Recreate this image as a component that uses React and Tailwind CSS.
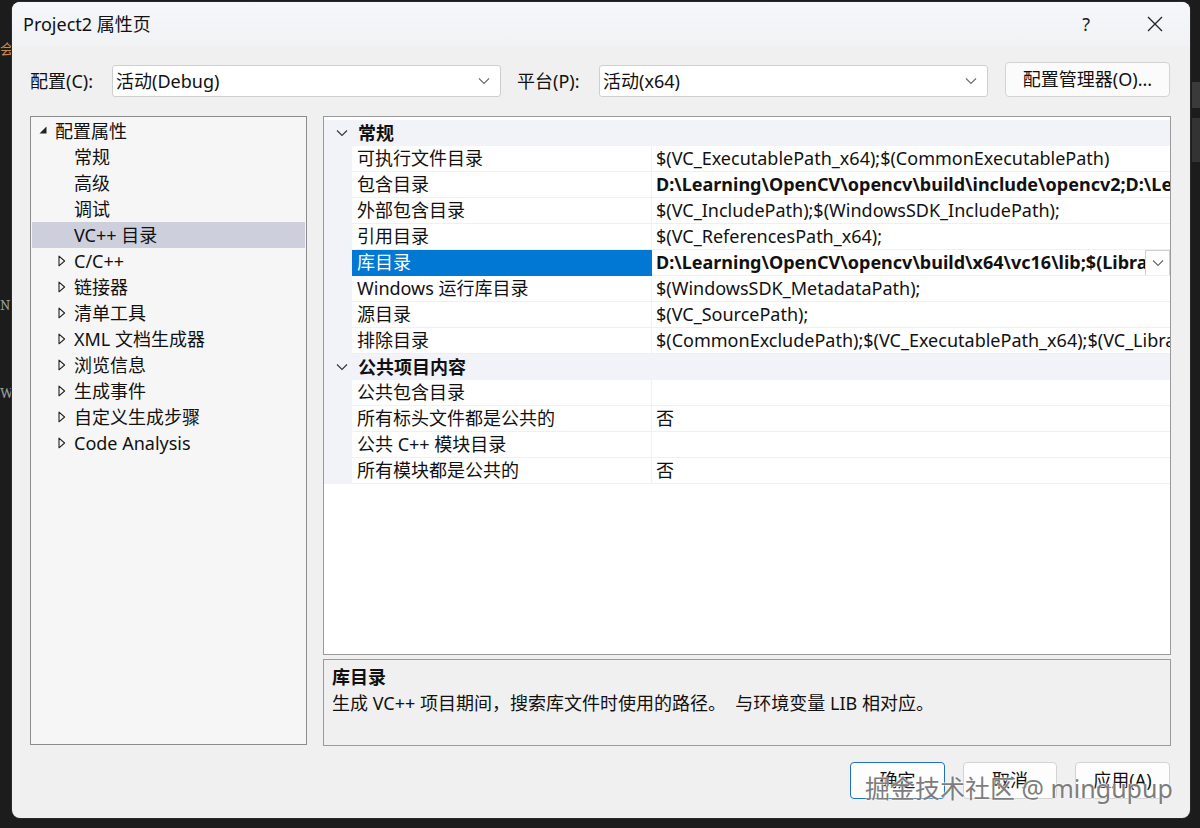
import React from 'react';

const FONT = { fontFamily: '"Noto Sans", "Noto Sans CJK SC", sans-serif' };

const treeItems = [
  { label: '常规' },
  { label: '高级' },
  { label: '调试' },
  { label: 'VC++ 目录', selected: true },
  { label: 'C/C++', collapsed: true },
  { label: '链接器', collapsed: true },
  { label: '清单工具', collapsed: true },
  { label: 'XML 文档生成器', collapsed: true },
  { label: '浏览信息', collapsed: true },
  { label: '生成事件', collapsed: true },
  { label: '自定义生成步骤', collapsed: true },
  { label: 'Code Analysis', collapsed: true },
];

const groups = [
  {
    title: '常规',
    rows: [
      { name: '可执行文件目录', value: '$(VC_ExecutablePath_x64);$(CommonExecutablePath)' },
      { name: '包含目录', value: 'D:\\Learning\\OpenCV\\opencv\\build\\include\\opencv2;D:\\Learning\\OpenCV\\opencv\\build\\include', bold: true },
      { name: '外部包含目录', value: '$(VC_IncludePath);$(WindowsSDK_IncludePath);' },
      { name: '引用目录', value: '$(VC_ReferencesPath_x64);' },
      { name: '库目录', value: 'D:\\Learning\\OpenCV\\opencv\\build\\x64\\vc16\\lib;$(LibraryPath)', bold: true, selected: true },
      { name: 'Windows 运行库目录', value: '$(WindowsSDK_MetadataPath);' },
      { name: '源目录', value: '$(VC_SourcePath);' },
      { name: '排除目录', value: '$(CommonExcludePath);$(VC_ExecutablePath_x64);$(VC_LibraryPath_x64)' },
    ],
  },
  {
    title: '公共项目内容',
    rows: [
      { name: '公共包含目录', value: '' },
      { name: '所有标头文件都是公共的', value: '否' },
      { name: '公共 C++ 模块目录', value: '' },
      { name: '所有模块都是公共的', value: '否' },
    ],
  },
];

const Chevron = ({ className = '' }) => (
  <svg className={className} width="12" height="8" viewBox="0 0 12 8" fill="none">
    <path d="M1 1.5l5 5 5-5" stroke="currentColor" strokeWidth="1.1" />
  </svg>
);

const OutlineTriangle = () => (
  <svg width="8" height="12" viewBox="0 0 8 12" fill="none">
    <path d="M1 1.2v9.6l5.6-4.8z" stroke="#222" strokeWidth="1.1" strokeLinejoin="round" />
  </svg>
);

const SolidTriangle = () => (
  <svg width="8" height="8" viewBox="0 0 8 8">
    <path d="M7.5 0.5v7h-7z" fill="#222" />
  </svg>
);

const Select = ({ value }) => (
  <div className="w-[389px] h-[32px] mt-[3px] bg-white border border-[#cfcfcf] rounded-[3px] flex items-center pl-[3px] pr-[10px]">
    <span className="flex-1 text-[18px] text-[#111]">{value}</span>
    <Chevron className="text-[#6b6b6b]" />
  </div>
);

export default function App() {
  return (
    <div className="w-[1200px] h-[828px] bg-[#1c1c1c] relative overflow-hidden" style={FONT}>
      {/* bits of the editor behind the dialog */}
      <div className="absolute left-[1192px] top-[82px] w-[8px] h-[26px] bg-[#3a3a3a]" />
      <div className="absolute left-[1192px] top-[118px] w-[8px] h-[44px] bg-[#333]" />
      <div className="absolute left-[0px] top-[38px] text-[14px] text-[#c98a4b]">会</div>
      <div className="absolute left-[0px] top-[294px] text-[15px] text-[#9a9a9a] font-serif">N</div>
      <div className="absolute left-[0px] top-[382px] text-[15px] text-[#9a9a9a] font-serif">W</div>

      <div className="absolute left-[12px] top-[2px] w-[1178px] h-[816px] rounded-[8px] bg-[#f0f0f0] flex flex-col overflow-hidden shadow-[0_0_0_1px_#2a2a2a]">
        {/* title bar */}
        <div className="h-[44px] flex items-center pl-[11px] pr-[27px] bg-gradient-to-b from-[#f5f7fa] to-[#f1f2f4] shrink-0">
          <span className="flex-1 text-[18px] text-[#111]">Project2 属性页</span>
          <span className="text-[18px] text-[#222] mr-[57px]">?</span>
          <svg width="16" height="16" viewBox="0 0 16 16">
            <path d="M1 1l14 14M15 1L1 15" stroke="#222" strokeWidth="1.3" />
          </svg>
        </div>

        {/* config row */}
        <div className="flex items-start mt-[16px] pl-[18px] shrink-0">
          <div className="w-[82px] h-[32px] mt-[3px] flex items-center text-[18px] text-[#111]">配置(C):</div>
          <Select value="活动(Debug)" />
          <div className="w-[82px] h-[32px] mt-[3px] ml-[16px] flex items-center text-[18px] text-[#111]">平台(P):</div>
          <Select value="活动(x64)" />
          <button className="ml-[17px] w-[165px] h-[35px] bg-[#fbfbfb] border border-[#d3d3d3] rounded-[4px] text-[18px] text-[#111]">
            配置管理器(O)...
          </button>
        </div>

        {/* main area */}
        <div className="flex mt-[19px] pl-[18px] pr-[19px] gap-[16px] shrink-0">
          {/* tree */}
          <div className="w-[277px] h-[629px] bg-[#f6f6f6] border border-[#8c8c8c] pt-[1px] px-[1px]">
            <div className="h-[26px] flex items-center text-[18px] text-[#111]">
              <span className="w-[23px] flex justify-end pr-[8px] mt-[-2px]"><SolidTriangle /></span>
              <span>配置属性</span>
            </div>
            {treeItems.map((it) => (
              <div
                key={it.label}
                className={`h-[26px] flex items-center text-[18px] text-[#111] ${it.selected ? 'bg-[#cdcfdc]' : ''}`}
              >
                <span className="w-[42px] flex justify-end pr-[8px]">{it.collapsed ? <OutlineTriangle /> : null}</span>
                <span>{it.label}</span>
              </div>
            ))}
          </div>

          {/* right side */}
          <div className="flex flex-col gap-[4px]">
            <div className="w-[848px] h-[539px] bg-white border border-[#9a9a9a] pt-[3px] overflow-hidden">
              {groups.map((g) => (
                <div key={g.title}>
                  <div className="h-[26px] flex items-center bg-[#f1f3f8] text-[18px] text-[#111] font-bold">
                    <span className="w-[34px] flex justify-center pl-[2px]"><Chevron className="text-[#333]" /></span>
                    <span>{g.title}</span>
                  </div>
                  {g.rows.map((r) => (
                    <div key={r.name} className="h-[26px] flex text-[18px] text-[#111]">
                      <div className="w-[28px] bg-[#f1f3f8] shrink-0" />
                      <div
                        className={`w-[300px] shrink-0 flex items-center pl-[5px] border-b border-r ${
                          r.selected ? 'bg-[#0078d4] text-white border-[#0078d4]' : 'border-[#eef0f3]'
                        }`}
                      >
                        {r.name}
                      </div>
                      <div className="flex-1 min-w-0 flex items-center pl-[4px] border-b border-[#eef0f3] relative overflow-hidden">
                        <span className={`whitespace-nowrap ${r.bold ? 'font-bold' : ''}`}>{r.value}</span>
                        {r.selected ? (
                          <div className="absolute right-0 top-0 w-[25px] h-[26px] bg-white border border-[#cfcfcf] flex items-center justify-center">
                            <Chevron className="text-[#666]" />
                          </div>
                        ) : null}
                      </div>
                    </div>
                  ))}
                </div>
              ))}
            </div>
            <div className="w-[848px] h-[87px] border border-[#9a9a9a] bg-[#f0f0f0] px-[8px] pt-[4px]">
              <div className="h-[26px] flex items-center text-[18px] font-bold text-[#111]">库目录</div>
              <div className="h-[26px] flex items-center text-[18px] text-[#111] whitespace-pre">
                生成 VC++ 项目期间，搜索库文件时使用的路径。  与环境变量 LIB 相对应。
              </div>
            </div>
          </div>
        </div>

        {/* bottom buttons */}
        <div className="flex justify-end gap-[18px] pr-[20px] mt-[16px] shrink-0">
          <button className="w-[95px] h-[37px] bg-[#fdfdfd] border-[1.5px] border-[#1f6fc9] rounded-[4px] text-[18px] text-[#111]">确定</button>
          <button className="w-[94px] h-[37px] bg-[#fdfdfd] border border-[#d3d3d3] rounded-[4px] text-[18px] text-[#111]">取消</button>
          <button className="w-[95px] h-[37px] bg-[#fdfdfd] border border-[#d3d3d3] rounded-[4px] text-[18px] text-[#111]">应用(A)</button>
        </div>
      </div>

      {/* watermark */}
      <div className="absolute left-[865px] top-[770px] text-[25px] text-[#7d7d7d] whitespace-nowrap [text-shadow:0_0_2px_#fff,0_0_2px_#fff]">
        掘金技术社区 @ mingupup
      </div>
    </div>
  );
}
